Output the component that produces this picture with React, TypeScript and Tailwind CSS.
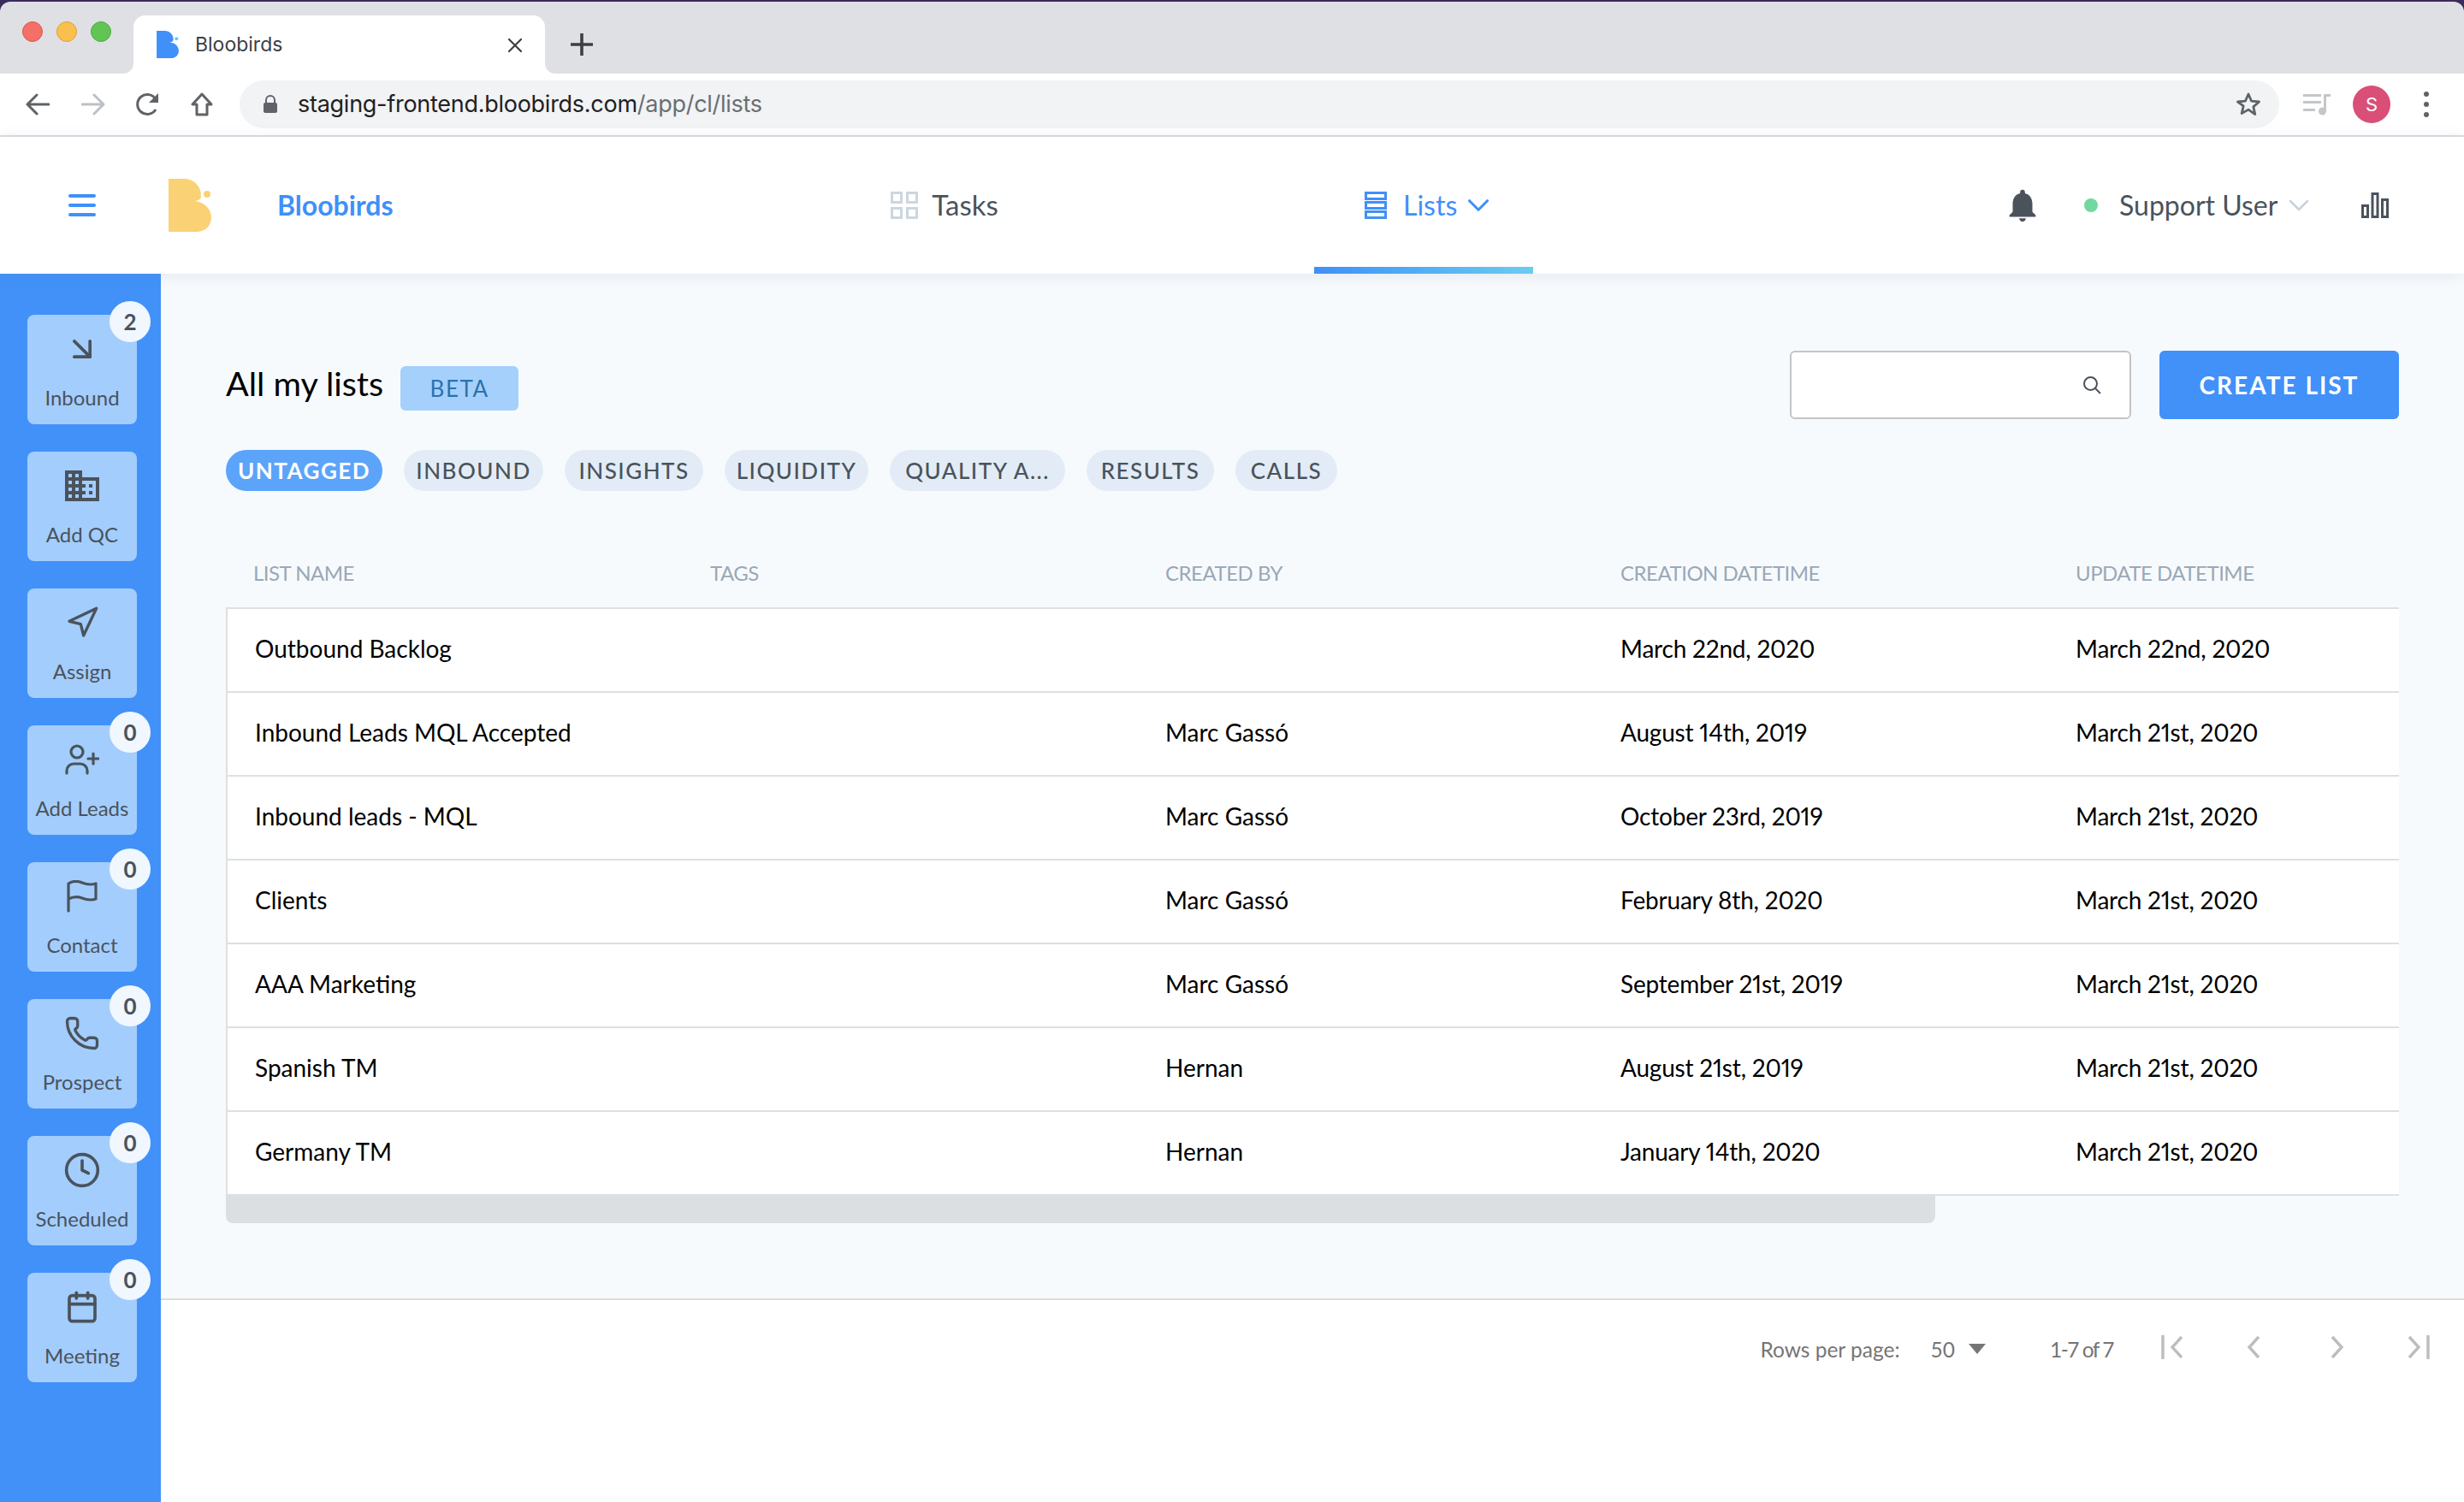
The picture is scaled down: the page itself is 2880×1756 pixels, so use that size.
import { ArrowDownRight, Calendar, ChevronDown, Clock, Navigation, Phone } from "lucide-react";
import type { ReactNode } from "react";

const font = "font-['Lato','Open_Sans',sans-serif]";

const Logo = ({ className, dot }: { className: string; dot: string }) => (
  <svg viewBox="0 0 50 62" className={className}>
    <path d="M0 0H18C30 0 38 9 38 20C38 24 35 26 28 26C40 26 50 34 50 45C50 56 42 62 32 62H0Z" fill="currentColor" />
    <ellipse cx="45" cy="18" rx="4" ry="4" fill={dot} />
  </svg>
);

const sideItems: { label: string; count?: number; icon: ReactNode }[] = [
  { label: "Inbound", count: 2, icon: <ArrowDownRight size={44} strokeWidth={2} /> },
  {
    label: "Add QC",
    icon: (
      <svg viewBox="0 0 24 24" className="h-[48px] w-[48px]" fill="currentColor">
        <path d="M12 7V3H2v18h20V7H12zM6 19H4v-2h2v2zm0-4H4v-2h2v2zm0-4H4V9h2v2zm0-4H4V5h2v2zm4 12H8v-2h2v2zm0-4H8v-2h2v2zm0-4H8V9h2v2zm0-4H8V5h2v2zm10 12h-8v-2h2v-2h-2v-2h2v-2h-2V9h8v10zm-2-8h-2v2h2v-2zm0 4h-2v2h2v-2z" />
      </svg>
    ),
  },
  { label: "Assign", icon: <Navigation size={40} strokeWidth={2} /> },
  {
    label: "Add Leads",
    count: 0,
    icon: (
      <svg viewBox="0 0 40 36" className="h-[36px] w-[40px]" fill="none" stroke="currentColor" strokeWidth="3.2" strokeLinecap="round">
        <circle cx="14" cy="9" r="7" />
        <path d="M2 34v-3a8 8 0 0 1 8-8h8a8 8 0 0 1 8 8v3" />
        <path d="M33 11v12M27 17h12" />
      </svg>
    ),
  },
  {
    label: "Contact",
    count: 0,
    icon: (
      <svg viewBox="0 0 36 38" className="h-[38px] w-[36px]" fill="none" stroke="currentColor" strokeWidth="3.2" strokeLinecap="round" strokeLinejoin="round">
        <path d="M2 36V4C8 0 13 1 18 3C23 5 28 6 34 4V22C28 24 23 23 18 21C13 19 8 19 2 22" />
      </svg>
    ),
  },
  { label: "Prospect", count: 0, icon: <Phone size={42} strokeWidth={1.9} /> },
  { label: "Scheduled", count: 0, icon: <Clock size={44} strokeWidth={2} /> },
  { label: "Meeting", count: 0, icon: <Calendar size={40} strokeWidth={2.2} /> },
];

const chips = [
  { label: "UNTAGGED", width: "w-[183px]" },
  { label: "INBOUND", width: "w-[163px]" },
  { label: "INSIGHTS", width: "w-[162px]" },
  { label: "LIQUIDITY", width: "w-[168px]" },
  { label: "QUALITY A...", width: "w-[205px]" },
  { label: "RESULTS", width: "w-[149px]" },
  { label: "CALLS", width: "w-[119px]" },
];
const columns = ["LIST NAME", "TAGS", "CREATED BY", "CREATION DATETIME", "UPDATE DATETIME"];
const rows = [
  ["Outbound Backlog", "", "March 22nd, 2020", "March 22nd, 2020"],
  ["Inbound Leads MQL Accepted", "Marc Gassó", "August 14th, 2019", "March 21st, 2020"],
  ["Inbound leads - MQL", "Marc Gassó", "October 23rd, 2019", "March 21st, 2020"],
  ["Clients", "Marc Gassó", "February 8th, 2020", "March 21st, 2020"],
  ["AAA Marketing", "Marc Gassó", "September 21st, 2019", "March 21st, 2020"],
  ["Spanish TM", "Hernan", "August 21st, 2019", "March 21st, 2020"],
  ["Germany TM", "Hernan", "January 14th, 2020", "March 21st, 2020"],
];

const BrowserChrome = () => (
  <div className="font-['Inter',sans-serif]">
    <div className="flex h-[84px] rounded-t-[12px] bg-[#dfe0e4]">
      <div className="flex items-center gap-[16px] pb-[14px] pl-[26px]">
        <div className="h-[24px] w-[24px] rounded-full border border-[#e0564f] bg-[#f46f66]" />
        <div className="h-[24px] w-[24px] rounded-full border border-[#dda03b] bg-[#f9c04e]" />
        <div className="h-[24px] w-[24px] rounded-full border border-[#4bab48] bg-[#61c554]" />
      </div>
      <div className="relative mt-[16px] ml-[26px] flex h-[68px] w-[481px] items-center rounded-t-[14px] bg-white pl-[27px]">
        <span className="absolute bottom-0 -left-[12px] h-[12px] w-[12px] bg-white">
          <span className="block h-full w-full rounded-br-[12px] bg-[#dfe0e4]" />
        </span>
        <span className="absolute -right-[12px] bottom-0 h-[12px] w-[12px] bg-white">
          <span className="block h-full w-full rounded-bl-[12px] bg-[#dfe0e4]" />
        </span>
        <Logo className="h-[32px] w-[26px] text-[#3f90f8]" dot="#6cc8f0" />
        <span className="ml-[19px] text-[23px] text-[#3c4043]">Bloobirds</span>
        <svg viewBox="0 0 18 18" className="absolute top-[26px] left-[437px] h-[18px] w-[18px]" stroke="#3c4043" strokeWidth="2.2" strokeLinecap="round">
          <path d="M2 2l14 14M16 2L2 16" />
        </svg>
      </div>
      <svg viewBox="0 0 28 28" className="mt-[36px] ml-[29px] h-[28px] w-[28px]" stroke="#3c4043" strokeWidth="3.6">
        <path d="M14 1v26M1 14h26" />
      </svg>
    </div>
    <div className="flex h-[74px] items-center border-b-2 border-[#dcdce0] bg-white">
      <div className="flex w-[280px] items-center gap-[37px] pl-[30px] text-[#5f6368]">
        <svg viewBox="0 0 28 26" className="h-[26px] w-[28px]" fill="none" stroke="currentColor" strokeWidth="3" strokeLinecap="round" strokeLinejoin="round">
          <path d="M27 13H3M13 2L2 13l11 11" />
        </svg>
        <svg viewBox="0 0 28 26" className="h-[26px] w-[28px] text-[#bdc1c6]" fill="none" stroke="currentColor" strokeWidth="3" strokeLinecap="round" strokeLinejoin="round">
          <path d="M1 13h24M15 2l11 11-11 11" />
        </svg>
        <svg viewBox="0 0 28 28" className="-ml-[2px] h-[28px] w-[28px]" fill="none" stroke="currentColor" strokeWidth="3">
          <path d="M24 20a11.5 11.5 0 1 1 0-12" />
          <path d="M27 1v11H16z" fill="currentColor" stroke="none" />
        </svg>
        <svg viewBox="0 0 26 28" className="h-[28px] w-[26px]" fill="none" stroke="currentColor" strokeWidth="3" strokeLinejoin="round">
          <path d="M13 2L2 14h5v12h12V14h5z" />
        </svg>
      </div>
      <div className="flex h-[56px] w-[2384px] items-center rounded-full bg-[#f1f3f4] pr-[21px] pl-[27px]">
        <svg viewBox="0 0 18 22" className="h-[22px] w-[18px]">
          <path d="M4 9V6a5 5 0 0 1 10 0v3" fill="none" stroke="#5f6368" strokeWidth="2" />
          <rect x="1" y="9" width="16" height="12" rx="2" fill="#5f6368" />
        </svg>
        <span className="ml-[23px] text-[27px] tracking-[-0.27px] text-[#202124]">
          staging-frontend.bloobirds.com<span className="text-[#6b6e72]">/app/cl/lists</span>
        </span>
        <svg viewBox="0 0 30 30" className="ml-auto h-[30px] w-[30px]" fill="none" stroke="#5f6368" strokeWidth="2.8" strokeLinejoin="round">
          <path d="M15 3l3.6 8.2 8.9.8-6.7 5.9 2 8.7L15 21.1 7.200 25.600l2-8.700L2.500 12l8.900-.8z" />
        </svg>
      </div>
      <svg viewBox="0 0 32 26" className="ml-[28px] h-[26px] w-[32px]" fill="#c4c6c9">
        <rect x="0" y="1" width="21" height="3" />
        <rect x="0" y="9" width="21" height="3" />
        <rect x="0" y="18" width="14" height="3" />
        <path d="M24 1h8v3h-5v17a4.500 4.500 0 1 1-3-4.200z" />
      </svg>
      <div className="ml-[26px] flex h-[44px] w-[44px] items-center justify-center rounded-full bg-[#d94f78] text-[22px] text-white">S</div>
      <div className="ml-[39px] flex flex-col gap-[6px]">
        <div className="h-[6px] w-[6px] rounded-full bg-[#5f6368]" />
        <div className="h-[6px] w-[6px] rounded-full bg-[#5f6368]" />
        <div className="h-[6px] w-[6px] rounded-full bg-[#5f6368]" />
      </div>
    </div>
  </div>
);

const AppHeader = () => (
  <header className={`relative z-10 flex h-[160px] items-center bg-white pl-[80px] shadow-[0_2px_16px_rgba(120,140,170,0.16)] ${font}`}>
    <div className="flex w-[32px] flex-col gap-[7px]">
      <div className="h-[4px] rounded-full bg-[#3f90f8]" />
      <div className="h-[4px] rounded-full bg-[#3f90f8]" />
      <div className="h-[4px] rounded-full bg-[#3f90f8]" />
    </div>
    <Logo className="ml-[85px] h-[62px] w-[50px] text-[#fad275]" dot="#fad275" />
    <span className="ml-[77px] w-[136px] text-[32px] font-bold whitespace-nowrap text-[#3f90f8]">Bloobirds</span>
    <div className="ml-[516px] flex h-full w-[256px] items-center justify-center gap-[16px] text-[33px] text-[#4a535c]">
      <svg viewBox="0 0 32 32" className="h-[32px] w-[32px]" fill="none" stroke="#ccd6e0" strokeWidth="3">
        <rect x="1.500" y="1.500" width="11" height="11" />
        <rect x="19.500" y="1.500" width="11" height="11" />
        <rect x="1.500" y="19.500" width="11" height="11" />
        <rect x="19.500" y="19.500" width="11" height="11" />
      </svg>
      Tasks
    </div>
    <div className="relative ml-[304px] flex h-full w-[256px] items-center pl-[59px] text-[32px] text-[#3f90f8]">
      <svg viewBox="0 0 26 32" className="h-[32px] w-[26px]" fill="none" stroke="currentColor" strokeWidth="3">
        <rect x="1.500" y="1.500" width="23" height="7" />
        <rect x="1.500" y="12.500" width="23" height="7" />
        <rect x="1.500" y="23.500" width="23" height="7" />
      </svg>
      <span className="ml-[19px]">Lists</span>
      <ChevronDown size={42} strokeWidth={1.8} className="ml-[4px]" />
      <div className="absolute right-0 bottom-0 left-0 h-[8px] bg-gradient-to-r from-[#3f90f8] to-[#6ccbee]" />
    </div>
    <svg viewBox="0 0 24 24" className="ml-[549px] h-[46px] w-[46px]" fill="#4a535c">
      <path d="M12 22c1.100 0 2-.9 2-2h-4c0 1.100.89 2 2 2zm6-6v-5c0-3.070-1.640-5.640-4.500-6.320V4c0-.83-.67-1.500-1.500-1.500s-1.500.67-1.500 1.500v.68C7.630 5.360 6 7.920 6 11v5l-2 2v1h16v-1l-2-2z" />
    </svg>
    <div className="ml-[49px] h-[16px] w-[16px] rounded-full bg-[#70d8a0]" />
    <span className="ml-[25px] text-[32px] text-[#4a535c]">Support User</span>
    <ChevronDown size={40} strokeWidth={1.5} className="ml-[5px] text-[#c6d2de]" />
    <svg viewBox="0 0 32 30" className="ml-[53px] h-[30px] w-[32px]" fill="none" stroke="#4a535c" strokeWidth="3">
      <rect x="1.500" y="15.500" width="6" height="13" />
      <rect x="13" y="1.500" width="6" height="27" />
      <rect x="24.500" y="8.500" width="6" height="20" />
    </svg>
  </header>
);

const Sidebar = () => (
  <aside className={`flex w-[188px] shrink-0 flex-col gap-[32px] bg-[#4191f9] pt-[48px] pl-[32px] ${font}`}>
    {sideItems.map((item) => (
      <div key={item.label} className="relative flex h-[128px] w-[128px] flex-col items-center rounded-[8px] bg-[#a3cdfd] pt-[16px] text-[#4a535c]">
        <div className="flex h-[48px] items-center justify-center">{item.icon}</div>
        <span className="mt-[19px] text-[24px] leading-[28px] whitespace-nowrap">{item.label}</span>
        {item.count !== undefined && (
          <div className="absolute -top-[16px] -right-[16px] flex h-[48px] w-[48px] items-center justify-center rounded-full bg-[#f0f7ff] text-[26px] font-bold">
            {item.count}
          </div>
        )}
      </div>
    ))}
  </aside>
);

const ListsTable = () => (
  <div className="mt-[56px] overflow-hidden">
    <div className="grid h-[80px] grid-cols-[534px_repeat(4,532px)] items-center pl-[32px] text-[24px] tracking-[-0.5px] text-[#9aa8b6]">
      {columns.map((col) => (
        <span key={col} className="whitespace-nowrap">{col}</span>
      ))}
    </div>
    <div className="border-b-2 border-l-2 border-[#dedfe0] bg-white">
      {rows.map((row) => (
        <div key={row[0]} className="grid h-[98px] grid-cols-[repeat(5,532px)] items-center border-t-2 border-[#dedfe0] pb-[4px] pl-[32px] text-[28px] text-black">
          <span className="whitespace-nowrap">{row[0]}</span>
          <span />
          <span className="whitespace-nowrap">{row[1]}</span>
          <span className="tracking-[-0.2px] whitespace-nowrap proportional-nums">{row[2]}</span>
          <span className="tracking-[-0.2px] whitespace-nowrap proportional-nums">{row[3]}</span>
        </div>
      ))}
    </div>
    <div className="h-[32px] w-[1998px] rounded-b-[8px] bg-[#dcdfe2]" />
  </div>
);

const Footer = () => (
  <footer className={`flex flex-1 items-start justify-end bg-white pt-[40px] pr-[40px] text-[24.5px] text-[#757575] ${font}`}>
    <span>Rows per page:</span>
    <span className="ml-[36px]">50</span>
    <svg viewBox="0 0 20 12" className="mt-[11px] ml-[16px] h-[12px] w-[20px]" fill="#757575">
      <path d="M0 0h20L10 12z" />
    </svg>
    <span className="ml-[75px] tracking-[-1.5px]">1-7 of 7</span>
    <svg viewBox="0 0 26 28" className="mt-[1px] ml-[56px] h-[28px] w-[26px]" fill="none" stroke="#bdbdbd" strokeWidth="3.4">
      <path d="M2 0v28M24 2L13 14l11 12" />
    </svg>
    <svg viewBox="0 0 16 28" className="mt-[1px] ml-[74px] h-[28px] w-[16px]" fill="none" stroke="#bdbdbd" strokeWidth="3.4">
      <path d="M14 2L3 14l11 12" />
    </svg>
    <svg viewBox="0 0 16 28" className="mt-[1px] ml-[82px] h-[28px] w-[16px]" fill="none" stroke="#bdbdbd" strokeWidth="3.4">
      <path d="M2 2l11 12L2 26" />
    </svg>
    <svg viewBox="0 0 26 28" className="mt-[1px] ml-[74px] h-[28px] w-[26px]" fill="none" stroke="#bdbdbd" strokeWidth="3.4">
      <path d="M24 0v28M2 2l11 12L2 26" />
    </svg>
  </footer>
);

export default function App() {
  return (
    <div className="h-[1756px] w-[2880px] overflow-hidden bg-[#3b2b5c] pt-[2px]">
      <BrowserChrome />
      <AppHeader />
      <div className="flex h-[1436px]">
        <Sidebar />
        <main className={`flex w-[2692px] flex-col ${font}`}>
          <div className="h-[1200px] border-b-2 border-[#dcdcdc] bg-[#f7fafd] px-[76px] pt-[90px]">
            <div className="flex h-[80px] items-center">
              <h1 className="-mt-[4px] text-[39.5px] leading-none text-black">All my lists</h1>
              <span className="mt-[8px] ml-[20px] flex h-[52px] w-[138px] items-center justify-center rounded-[6px] bg-[#a5d0fc] text-[26px] tracking-[1.5px] text-[#2b72ad]">BETA</span>
              <div className="ml-auto flex h-[80px] w-[399px] items-center justify-end rounded-[6px] border-2 border-[#c4c4c4] bg-white pr-[33px]">
                <svg viewBox="0 0 22 22" className="h-[22px] w-[22px]" fill="none" stroke="#4a535c" strokeWidth="2">
                  <circle cx="9.500" cy="9.500" r="7.500" />
                  <path d="M15 15l6 6" />
                </svg>
              </div>
              <button className="ml-[33px] h-[80px] w-[280px] rounded-[6px] bg-[#4191f9] text-[28px] font-bold tracking-[2px] text-white">CREATE LIST</button>
            </div>
            <div className="mt-[36px] flex gap-[25px]">
              {chips.map((chip, i) => (
                <span
                  key={chip.label}
                  className={`flex h-[48px] items-center justify-center rounded-full text-[26px] tracking-[1.5px] whitespace-nowrap ${chip.width} ${
                    i === 0 ? "bg-[#5ba4fa] font-bold text-white" : "bg-[#e3ecf6] font-medium text-[#4a535c]"
                  }`}
                >
                  {chip.label}
                </span>
              ))}
            </div>
            <ListsTable />
          </div>
          <Footer />
        </main>
      </div>
    </div>
  );
}
